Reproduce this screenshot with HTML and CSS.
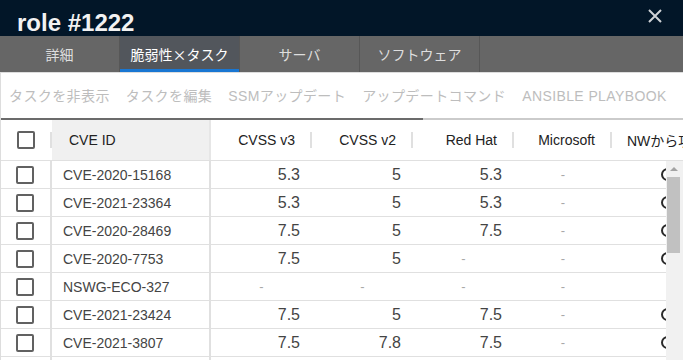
FILE: index.html
```html
<!DOCTYPE html>
<html lang="ja">
<head>
<meta charset="utf-8">
<title>role #1222</title>
<link rel="stylesheet" href="styles.css">
</head>
<body>
<div class="modal">
  <header class="titlebar">
    <h1 class="title">role #1222</h1>
    <button class="close" aria-label="close">
      <svg width="14" height="14" viewBox="0 0 14 14"><path d="M1 1L13 13M13 1L1 13" stroke="#cfd2d6" stroke-width="2" fill="none"/></svg>
    </button>
  </header>
  <nav class="tabs">
    <div class="tab">詳細</div>
    <div class="tab active">脆弱性×タスク</div>
    <div class="tab">サーバ</div>
    <div class="tab">ソフトウェア</div>
  </nav>
  <section class="content">
    <div class="toolbar">
      <span class="tbtn">タスクを非表示</span>
      <span class="tbtn">タスクを編集</span>
      <span class="tbtn">SSMアップデート</span>
      <span class="tbtn">アップデートコマンド</span>
      <span class="tbtn">Ansible Playbook</span>
    </div>
    <div class="hscroll"><div class="hthumb"></div></div>
    <div class="thead">
      <div class="th th-cb"><span class="cb"></span><span class="sep"></span></div>
      <div class="th th-id">CVE ID</div>
      <div class="th th-num">CVSS v3<span class="sep"></span></div>
      <div class="th th-num">CVSS v2<span class="sep"></span></div>
      <div class="th th-num">Red Hat<span class="sep"></span></div>
      <div class="th th-num">Microsoft<span class="sep"></span></div>
      <div class="th th-last">NWから攻撃可能</div>
    </div>
    <div class="tbody">
      <div class="rows">
        <div class="row">
          <div class="td td-cb"><span class="cb"></span></div>
          <div class="td td-id">CVE-2020-15168</div>
          <div class="td td-num">5.3</div>
          <div class="td td-num">5</div>
          <div class="td td-num">5.3</div>
          <div class="td td-dash">-</div>
          <div class="td td-last"><span class="ring"></span></div>
        </div>
        <div class="row">
          <div class="td td-cb"><span class="cb"></span></div>
          <div class="td td-id">CVE-2021-23364</div>
          <div class="td td-num">5.3</div>
          <div class="td td-num">5</div>
          <div class="td td-num">5.3</div>
          <div class="td td-dash">-</div>
          <div class="td td-last"><span class="ring"></span></div>
        </div>
        <div class="row">
          <div class="td td-cb"><span class="cb"></span></div>
          <div class="td td-id">CVE-2020-28469</div>
          <div class="td td-num">7.5</div>
          <div class="td td-num">5</div>
          <div class="td td-num">7.5</div>
          <div class="td td-dash">-</div>
          <div class="td td-last"><span class="ring"></span></div>
        </div>
        <div class="row">
          <div class="td td-cb"><span class="cb"></span></div>
          <div class="td td-id">CVE-2020-7753</div>
          <div class="td td-num">7.5</div>
          <div class="td td-num">5</div>
          <div class="td td-dash">-</div>
          <div class="td td-dash">-</div>
          <div class="td td-last"><span class="ring"></span></div>
        </div>
        <div class="row">
          <div class="td td-cb"><span class="cb"></span></div>
          <div class="td td-id">NSWG-ECO-327</div>
          <div class="td td-dash">-</div>
          <div class="td td-dash">-</div>
          <div class="td td-dash">-</div>
          <div class="td td-dash">-</div>
          <div class="td td-last"></div>
        </div>
        <div class="row">
          <div class="td td-cb"><span class="cb"></span></div>
          <div class="td td-id">CVE-2021-23424</div>
          <div class="td td-num">7.5</div>
          <div class="td td-num">5</div>
          <div class="td td-num">7.5</div>
          <div class="td td-dash">-</div>
          <div class="td td-last"><span class="ring"></span></div>
        </div>
        <div class="row">
          <div class="td td-cb"><span class="cb"></span></div>
          <div class="td td-id">CVE-2021-3807</div>
          <div class="td td-num">7.5</div>
          <div class="td td-num">7.8</div>
          <div class="td td-num">7.5</div>
          <div class="td td-dash">-</div>
          <div class="td td-last"><span class="ring"></span></div>
        </div>
        <div class="row">
          <div class="td td-cb"><span class="cb"></span></div>
          <div class="td td-id">CVE-2021-33587</div>
          <div class="td td-num">7.5</div>
          <div class="td td-num">5</div>
          <div class="td td-num">7.5</div>
          <div class="td td-dash">-</div>
          <div class="td td-last"><span class="ring"></span></div>
        </div>
      </div>
      <div class="vscroll">
        <div class="varrow"></div>
        <div class="vthumb"></div>
      </div>
    </div>
  </section>
</div>
</body>
</html>
```
FILE: styles.css
```css
html, body {
  margin: 0;
  padding: 0;
  background: #fff;
}

.modal {
  width: 683px;
  height: 360px;
  overflow: hidden;
  background: #fff;
  font-family: "Liberation Sans", "Noto Sans CJK JP", sans-serif;
}

/* title bar */
.titlebar {
  height: 36px;
  box-sizing: border-box;
  background: #021628;
  display: flex;
  justify-content: space-between;
  align-items: flex-start;
  padding: 0 21px 0 17px;
}

.title {
  margin: 0;
  padding-top: 9px;
  font-size: 24px;
  line-height: 27px;
  font-weight: 700;
  color: #f2f2f2;
}

.close {
  margin-top: 9px;
  width: 14px;
  height: 14px;
  padding: 0;
  border: 0;
  background: none;
  display: block;
}

.close svg {
  display: block;
}

/* tabs */
.tabs {
  display: flex;
  height: 36px;
  background: #666666;
}

.tab {
  width: 120px;
  box-sizing: border-box;
  border-right: 1px solid #575757;
  display: flex;
  align-items: center;
  justify-content: center;
  font-family: "Noto Sans CJK JP", "Liberation Sans", sans-serif;
  font-size: 14px;
  line-height: 20px;
  color: #dedede;
}

.tab.active {
  background: #52565c;
  color: #ffffff;
  box-shadow: inset 0 -3px 0 #1976d2;
}

/* content */
.content {
  border-top: 1px solid #dddddd;
  border-left: 1px solid #dddddd;
  height: 287px;
}

.toolbar {
  height: 45px;
  display: flex;
  align-items: center;
  white-space: nowrap;
  overflow: hidden;
}

.tbtn {
  padding: 6px 8px;
  font-size: 14px;
  line-height: 20px;
  letter-spacing: 0.4px;
  text-transform: uppercase;
  color: #bdbdbd;
}

.hscroll {
  height: 2px;
  background: #cbcbcb;
}

.hthumb {
  width: 422px;
  height: 100%;
  background: #6b6b6b;
}

/* table */
.thead,
.row {
  display: grid;
  grid-template-columns: 51px 159px 101px 101px 101px 98px 120px;
}

.thead {
  height: 40px;
  border-bottom: 1px solid #e0e0e0;
  overflow: hidden;
  font-size: 14px;
  color: #222222;
}

.th {
  display: flex;
  align-items: center;
  white-space: nowrap;
}

.th-cb {
  padding-left: 16px;
}

.th-cb .sep {
  margin-left: auto;
}

.th-id {
  background: #f0f0f0;
  padding-left: 17px;
  border-right: 2px solid #e6e6e6;
}

.th-num {
  justify-content: flex-end;
}

.sep {
  display: block;
  width: 2px;
  height: 16px;
  margin-left: 15px;
  background: #e0e0e0;
}

.th-last {
  padding-left: 15px;
  overflow: hidden;
}

.cb {
  display: block;
  width: 18px;
  height: 18px;
  box-sizing: border-box;
  border: 2px solid #616161;
  border-radius: 2px;
}

.tbody {
  display: flex;
  height: 199px;
}

.rows {
  flex: 1;
  overflow: hidden;
}

.row {
  height: 28px;
  box-sizing: border-box;
  border-bottom: 1px solid #e0e0e0;
}

.td {
  display: flex;
  align-items: center;
  white-space: nowrap;
  color: #444444;
}

.td-cb {
  justify-content: center;
  padding-right: 2px;
  border-right: 2px solid #e0e0e0;
}

.td-id {
  padding-left: 11px;
  font-size: 14px;
  border-right: 2px solid #e0e0e0;
}

.td-num {
  justify-content: flex-end;
  padding-right: 12px;
  font-size: 16px;
}

.td-dash {
  justify-content: center;
  font-size: 13px;
  color: #a8a8a8;
}

.td-last {
  padding-left: 49px;
}

.ring {
  display: block;
  width: 13px;
  height: 13px;
  box-sizing: border-box;
  border: 2px solid #2a2a2a;
  border-radius: 50%;
}

/* vertical scrollbar */
.vscroll {
  width: 17px;
  background: #f1f1f1;
  display: flex;
  flex-direction: column;
  align-items: flex-start;
  padding-left: 1px;
  box-sizing: border-box;
}

.varrow {
  margin: 6px 0 0 3px;
  width: 0;
  height: 0;
  border-left: 4px solid transparent;
  border-right: 4px solid transparent;
  border-bottom: 4px solid #a3a3a3;
}

.vthumb {
  margin-top: 6px;
  width: 13px;
  height: 76px;
  background: #c1c1c1;
}
```
